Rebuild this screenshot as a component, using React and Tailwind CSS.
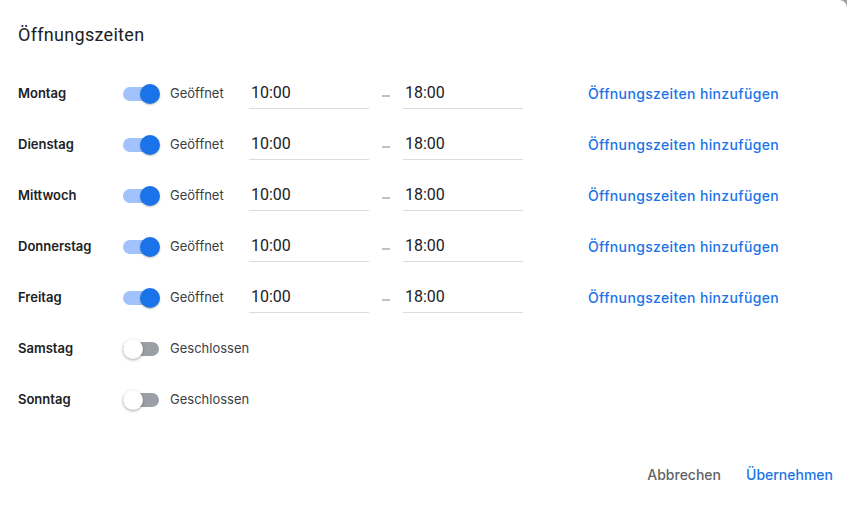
import React from "react";

const days = [
  { name: "Montag", open: true },
  { name: "Dienstag", open: true },
  { name: "Mittwoch", open: true },
  { name: "Donnerstag", open: true },
  { name: "Freitag", open: true },
  { name: "Samstag", open: false },
  { name: "Sonntag", open: false },
];

const inter = { fontFamily: "Inter, 'Noto Sans', sans-serif" };

function Toggle({ on }) {
  return (
    <div className="relative w-[37px] h-[20px] flex items-center">
      <div className={"w-[36px] h-[14px] rounded-full " + (on ? "bg-[#a1c2fa]" : "bg-[#9aa0a6]")} />
      {on ? (
        <div className="absolute right-0 top-0 w-[20px] h-[20px] rounded-full bg-[#1a73e8] shadow-[0_1px_2px_rgba(0,0,0,0.25)]" />
      ) : (
        <div className="absolute left-0 top-0 w-[20px] h-[20px] rounded-full bg-white shadow-[0_1px_3px_rgba(0,0,0,0.35)]" />
      )}
    </div>
  );
}

function TimeInput({ value }) {
  return (
    <div className="w-[120px] h-[30px] flex items-center border-b border-[#dadce0] pl-[2px] text-[16px] text-[#202124]">
      {value}
    </div>
  );
}

export default function App() {
  return (
    <div className="w-[847px] h-[506px] bg-white relative overflow-hidden" style={{ fontFamily: "Roboto, 'Noto Sans', sans-serif" }}>
      <div className="absolute right-0 top-0 w-[8px] h-[8px] bg-[#a0a0a0]">
        <div className="w-full h-full bg-white rounded-tr-[8px]" />
      </div>
      <div className="pl-[18px] pt-[23px] text-[18px] leading-[24px] tracking-[0.3px] text-[#202124]">Öffnungszeiten</div>
      <div className="flex flex-col pl-[18px] pt-[21px]">
        {days.map((d) => (
          <div key={d.name} className="h-[51px] flex items-center">
            <div className="w-[105px] text-[13px] font-semibold text-[#202124]" style={inter}>{d.name}</div>
            <Toggle on={d.open} />
            <div className="ml-[10px] text-[13px] text-[#3c4043] w-[79px]" style={inter}>{d.open ? "Geöffnet" : "Geschlossen"}</div>
            {d.open && (
              <>
                <TimeInput value="10:00" />
                <div className="w-[34px] flex justify-center pt-[5px]">
                  <div className="w-[8px] h-[1.5px] bg-[#bdc1c6]" />
                </div>
                <TimeInput value="18:00" />
                <div className="ml-[65px] text-[14px] font-medium tracking-[0.35px] text-[#1a73e8]" style={inter}>Öffnungszeiten hinzufügen</div>
              </>
            )}
          </div>
        ))}
      </div>
      <div className="absolute right-[14px] bottom-[21px] flex items-center gap-[25px] text-[14px] font-medium" style={inter}>
        <div className="text-[#5f6368]">Abbrechen</div>
        <div className="text-[#1a73e8]">Übernehmen</div>
      </div>
    </div>
  );
}
